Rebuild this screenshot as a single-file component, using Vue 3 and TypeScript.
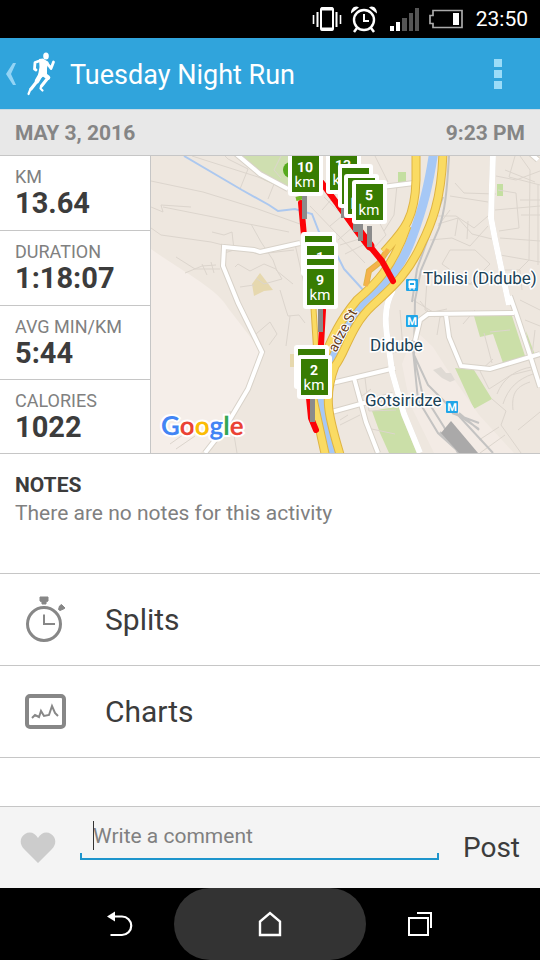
<script setup lang="ts">
import { ref } from 'vue'

interface Stat {
  label: string
  value: string
}

interface Marker {
  x: number
  y: number
  km: number
}

const stats: Stat[] = [
  { label: 'KM', value: '13.64' },
  { label: 'DURATION', value: '1:18:07' },
  { label: 'AVG MIN/KM', value: '5:44' },
  { label: 'CALORIES', value: '1022' },
]

const markers: Marker[] = [
  { x: 330, y: 154, km: 13 },
  { x: 342, y: 168, km: 12 },
  { x: 348, y: 178, km: 4 },
  { x: 356, y: 184, km: 5 },
  { x: 292, y: 156, km: 10 },
  { x: 305, y: 236, km: 7 },
  { x: 307, y: 246, km: 1 },
  { x: 307, y: 259, km: 8 },
  { x: 307, y: 269, km: 9 },
  { x: 298, y: 349, km: 3 },
  { x: 301, y: 359, km: 2 },
]

const posts: { x: number; y: number; h: number }[] = [
  { x: 302, y: 195, h: 24 },
  { x: 341, y: 204, h: 14 },
  { x: 353, y: 218, h: 14 },
  { x: 358, y: 222, h: 19 },
  { x: 367, y: 226, h: 21 },
  { x: 318, y: 307, h: 25 },
  { x: 310, y: 398, h: 24 },
]

const comment = ref('')
const liked = ref(false)
</script>

<template>
  <div class="screen">
    <div class="status">
      <svg width="30" height="26" viewBox="0 0 30 26" fill="none" stroke="#fff">
        <rect x="9" y="2" width="12" height="22" rx="1.5" stroke-width="2" />
        <path d="M9 3h12M9 23h12" stroke-width="3" />
        <path d="M5.500 6v15M24.500 6v15" stroke-width="2" />
        <path d="M1.500 9v9M28.500 9v9" stroke-width="1.600" />
      </svg>
      <svg width="28" height="28" viewBox="0 0 28 28" fill="none" stroke="#fff">
        <circle cx="14" cy="15" r="10" stroke-width="2.400" />
        <path d="M14 9v7h5" stroke-width="2" />
        <path d="M7 23l-3 4M21 23l3 4" stroke-width="2.500" />
        <path d="M1 8.500C1 3 5 0 9 2.500zM27 8.500C27 3 23 0 19 2.500z" fill="#fff" stroke="none" />
      </svg>
      <svg class="signal" width="30" height="24" viewBox="0 0 30 24">
        <path d="M0 19h4v5H0zM6 15h4v9H6z" fill="#fff" />
        <path d="M12 11h5v13h-5zM19 6h4v18h-4zM25 1h4v23h-4z" fill="#555" />
      </svg>
      <svg width="36" height="20" viewBox="0 0 36 20">
        <path d="M5 1.500h29v17H5v-4H2v-8h3z" fill="none" stroke="#aaa" stroke-width="1.700" />
        <path d="M25 4h6v12h-6z" fill="#fff" />
      </svg>
      <time>23:50</time>
    </div>

    <header class="bar">
      <button class="up" type="button" aria-label="Back">
        <svg width="11" height="22" viewBox="0 0 11 22">
          <path d="M10 0 7 0 0 11 7 22h3L5 11z" fill="#93d4f5" />
        </svg>
        <svg width="30" height="44" viewBox="0 0 30 44" fill="none" stroke="#fff" stroke-linejoin="round" stroke-linecap="round">
          <ellipse cx="19" cy="4" rx="2.800" ry="3.600" fill="#fff" stroke="none" />
          <path d="M12 7 16 6.500 21.500 10 20 16 20 22 14 26 11 23.500 12.500 15z" fill="#fff" stroke="none" />
          <path d="M13.500 8.500 8 10.500 7.500 17 9 18M20 11 24 16.500 26.500 10" stroke-width="2.800" />
          <path d="M13.500 23 10 29M17 22.500 21 25.500" stroke-width="4.600" />
          <path d="M9.500 30 4 37M20.500 26.500 14.500 34" stroke-width="3.200" />
          <path d="M3.500 37 1.500 42M14 34.500 13.500 36.500 15.500 38.500" stroke-width="2.200" />
        </svg>
      </button>
      <h1>Tuesday Night Run</h1>
      <button class="more" type="button" aria-label="More options">
        <svg width="8" height="32" viewBox="0 0 8 32">
          <path d="M0 1h8v8H0zM0 12h8v8H0zM0 23h8v8H0z" fill="#9bdcf8" />
        </svg>
      </button>
    </header>

    <div class="date"><span>MAY 3, 2016</span><span>9:23 PM</span></div>

    <section class="summary">
      <dl class="stats">
        <div v-for="s in stats" :key="s.label" class="stat">
          <dt>{{ s.label }}</dt>
          <dd>{{ s.value }}</dd>
        </div>
      </dl>
      <svg class="map" viewBox="151 156 389 297" preserveAspectRatio="xMidYMid slice" role="img" aria-label="Route map">
        <rect x="100" y="100" width="500" height="400" fill="#eee7df" />
        <path d="M151 249C180 270 218 289 228 308L262 352 226 432 200 453H151z" fill="#f5eee9" />
        <path d="M235 156h61v27l-12 6-20-9z" fill="#cfdfb0" />
        <path d="M398 172h8v11h-8zM497 184h6v12h-6z" fill="#c4dfa1" />
        <path d="M474 316h38l13 40-22 7-10-29-13 3zM455 368l19 2 18 29-18 10zM372 411l28-5 18 47h-29l-9-20z" fill="#cbdfa8" />
        <path d="M526 331l9 24-5 2z" fill="#cbdfa8" />
        <path d="M260 273l13 17-9 1-10 5-2-12zM290 354h9v13h-9z" fill="#e6d8ae" />
        <path d="M415 330l18 17 14 22 32 46 35 38h-80l-24-49-8-40z" fill="#f3ebe5" />
        <path d="M433 370l8-3 5 6 5 0 4 7-5 2-8-4z" fill="#dfdad4" />

        <g class="lanes">
          <path d="M151 181 203 192 255 208 300 224M151 207l12 5-2-7 30 2M151 228l10 7 50 7 48 12 35-4M163 207l126 25M192 156l66 21 16 7-6 15M225 156l3 3 20 10-8 20M212 232l12 3 8-3 2 18-13 4M251 224l10 18 12 18 4 11 16 13M176 257l19 12h25M185 273l17-7 14-1M202 264l5 11M211 262l3 11M235 267l3-3 12 7 14-7 12 5 6 10-18 5-8-6M240 287l14-2M280 290l6 20 2 6 11-1 6 8M290 316l-4 30M281 178l-7-8 7-14" />
          <path d="M322 210l16-18M330 226l18-15M338 240l16-14M345 254l20-10M310 206l55 57M324 197l45 44M295 244l14 62M378 220l8 15-12 13M397 185l-3 30-10 16M340 245l29-9M362 240l9 9M450 196l38 6M455 183l9 10 32 1M438 216l18 0 18 12 14-12M438 224l20-6 14 16 20 5M430 240l22-2 18 8 18-20M450 210l-12 16M458 218l-3 18M468 221l-1 18M495 210l45-4M515 156l-6 21 31 8M496 176l20 4 24-9M505 170l30 12M498 190l18 3 3 35-20 3M520 156l10 14-1 90-12 12M500 238l40 3M500 255l40 7M450 250l25 0 15 14-20 20-28-20zM460 284l30 0M500 270l20 0 2 20M520 200h20M521 215h19M538 185v80" />
          <path d="M413 300l20 12 14-3M427 280l-2 30 10 7M460 314l-20 3-3 18M463 324l12-14M493 359l-13 12 9 18 22-14 24-6M492 399l14 12-5 14 20 28M497 394c6-16 20-25 35-27M503 404c5-16 15-25 30-30M513 410c-2-18 5-24 17-28M518 430l22-18M357 386l5 10 9-7M365 378l4 33 27-1M340 425l20-10M367 428l28 6M400 310l3 40-10 3M420 301l8 10M510 302l15 40M520 300l20 10M525 320l15 6M535 330l-3 25M248 330l8 4 14-12 7 12-8 11M170 444l17-12M176 449l19-13M230 411l7 42M375 156l13 26M340 420l8-5M510 330l-20 2M492 363l-8-30M479 440l20-13M480 453l25-18" />
        </g>
        <path d="M184 156 242 190 269 205 278 211 295 209 312 214 319 232 334 249 344 269 365 292" fill="none" stroke="#acc8ef" stroke-width="2" />

        <g class="rail">
          <path d="M449 156c-2 35-4 55-10 72l-18 42-6 30-1 56 8 36 22 35 14 26M443 197l-26 72-5 33M414 355l14 30 30 30 35 38M412 340l6 60 20 33 22 20" />
          <path d="M440 432l20 21M449 409l30 20M452 413l27 10M459 413l20 17" />
        </g>
        <path d="M441 433l10-12 27 32h-19z" fill="#aaa9a9" />

        <g class="roadEdge">
          <path d="M235 153 260 174 288 189" />
          <path d="M300 243 260 252 254 250 224 247 223 266 238 303 262 352 248 389 226 426 205 453" />
          <path d="M493 153 491 218 495 239 509 305" />
          <path d="M510 296 517 316 529 352 540 387" />
          <path d="M393 290C379 315 389 340 392 372L404 414 420 453" />
          <path d="M415 341l5-21 8-6 86-1M446 315l3 22 12 29 29 3 50-15" />
          <path d="M328 384l67-16M354 378l12 44 12 31M328 413l65-18M374 188l40-5M530 153l8 7" />
        </g>
        <g class="road">
          <path d="M235 153 260 174 288 189" />
          <path d="M300 243 260 252 254 250 224 247 223 266 238 303 262 352 248 389 226 426 205 453" />
          <path class="wide" d="M493 153 491 218 495 239 509 305" />
          <path d="M510 296 517 316 529 352 540 387" />
          <path class="wide" d="M393 290C379 315 389 340 392 372L404 414 420 453" />
          <path d="M415 341l5-21 8-6 86-1M446 315l3 22 12 29 29 3 50-15" />
          <path d="M328 384l67-16M354 378l12 44 12 31M328 413l65-18M374 188l40-5M530 153l8 7" />
        </g>

        <path class="river" d="M434 150C429 185 423 208 412 238 405 257 395 274 382 286 356 303 349 322 338 345 325 364 316 382 321 410L332 458" />
        <g class="highwayEdge">
          <path d="M416 150V180C415 222 401 233 384 252M407 226C392 270 373 286 357 300 340 320 332 338 323 360L311 390 326 458" />
          <path d="M443 150C442 200 431 225 421 245 407 276 389 290 373 305 350 326 346 352 335 366 322 400 330 420 341 458" />
          <path class="thin" d="M313 300l3 48-8 50M388 249l-9 14-10 8-3 15" />
        </g>
        <g class="highway">
          <path d="M416 150V180C415 222 401 233 384 252M407 226C392 270 373 286 357 300 340 320 332 338 323 360L311 390 326 458" />
          <path d="M443 150C442 200 431 225 421 245 407 276 389 290 373 305 350 326 346 352 335 366 322 400 330 420 341 458" />
          <path class="thin" d="M313 300l3 48-8 50" />
          <path class="thin ramp" d="M388 249l-9 14-10 8-3 15" />
        </g>

        <circle cx="291" cy="170" r="8" fill="#56a91d" />
        <path d="M296 199l8-2" stroke="#76b82a" stroke-width="4" />
        <path d="M301 203 304 236M322 307 323 310 321 345M309 398 311 418 316 430" class="track" />
        <path d="M322 183 347 217 368 244 382 261 393 281" class="track" />
        <path d="M340 205 357 229 370 246" class="track heavy" />
        <g fill="#8b8b8b">
          <rect v-for="p in posts" :key="p.x" :x="p.x" :y="p.y" width="5" :height="p.h" />
        </g>

        <g v-for="m in markers" :key="m.km" class="marker">
          <rect :x="m.x - 4" :y="m.y - 4" width="35" height="44" rx="3" fill="#fff" />
          <rect :x="m.x" :y="m.y" width="27" height="36" fill="#387c02" />
          <text class="num" :x="m.x + 13" :y="m.y + 16">{{ m.km }}</text>
          <text class="unit" :x="m.x + 13" :y="m.y + 31">km</text>
        </g>

        <text class="street" transform="translate(336 353) rotate(-62)">adze St</text>

        <g class="station">
          <rect x="406" y="279" width="12" height="12" rx="1" />
          <path d="M409 281h6v7h-6zM409 289h2M413 289h2" fill="#fff" stroke="#fff" />
          <path d="M410 283h4v2h-4z" fill="#20a5e8" />
          <rect x="406" y="315" width="12" height="12" rx="1" />
          <rect x="446" y="401" width="12" height="12" rx="1" />
          <text x="412" y="325">M</text>
          <text x="452" y="411">M</text>
        </g>
        <g class="place">
          <text x="423" y="284">Tbilisi (Didube) B</text>
          <text x="370" y="351">Didube</text>
          <text x="365" y="406">Gotsiridze</text>
        </g>
        <text class="google" x="161" y="435"><tspan fill="#4285f4">G</tspan><tspan fill="#ea4335">o</tspan><tspan fill="#fbbc05">o</tspan><tspan fill="#4285f4">g</tspan><tspan fill="#34a853">l</tspan><tspan fill="#ea4335">e</tspan></text>
      </svg>
    </section>

    <section class="notes">
      <h2>NOTES</h2>
      <p>There are no notes for this activity</p>
    </section>

    <nav class="links">
      <button type="button">
        <svg width="42" height="48" viewBox="0 0 42 48" fill="none" stroke="#878787">
          <circle cx="19" cy="28" r="16.500" stroke-width="3" />
          <path d="M19 18.500V28h11" stroke-width="2" />
          <path d="M15 1h8v4l-2 1v2h-4V6l-2-1zM33.500 13.500l1-3.500 2-1.500 3.500 3.500-1.500 1-3.500 1.500z" fill="#878787" stroke="#878787" stroke-width="1" />
        </svg>
        Splits
      </button>
      <button type="button">
        <svg width="42" height="36" viewBox="0 0 42 36" fill="none" stroke="#878787">
          <rect x="2" y="2" width="37" height="31" rx="3" stroke-width="4" />
          <path d="M7 24l3-3 4 2 2-6 3 5 5-1 3-9 3 7 3 3" stroke-width="2" />
        </svg>
        Charts
      </button>
    </nav>

    <form class="comment" @submit.prevent="comment = ''">
      <button class="like" type="button" aria-label="Like" :aria-pressed="liked" @click="liked = !liked">
        <svg width="36" height="32" viewBox="0 0 36 32">
          <path d="M18 31 4 17C-1 12 0 5 5 2c5-3 10-1 13 4 3-5 8-7 13-4 5 3 6 10 1 15z" fill="#ccc" />
        </svg>
      </button>
      <div class="field">
        <input v-model="comment" type="text" aria-label="Write a comment" placeholder="Write a comment" />
      </div>
      <button class="post" type="submit">Post</button>
    </form>

    <nav class="system">
      <button type="button" aria-label="Back">
        <svg width="26" height="26" viewBox="0 0 26 26">
          <path d="M6 5.500h9a9.200 9.200 0 0 1 0 18.500H3.500" fill="none" stroke="#fff" stroke-width="2.200" />
          <path d="M0 5.500 8 .5v10z" fill="#fff" />
        </svg>
      </button>
      <button class="home" type="button" aria-label="Home">
        <svg width="24" height="26" viewBox="0 0 24 26">
          <path d="M2 24V10.500L12 2l10 8.500V24z" fill="none" stroke="#fff" stroke-width="2.400" />
        </svg>
      </button>
      <button type="button" aria-label="Recent apps">
        <svg width="26" height="26" viewBox="0 0 26 26" fill="none" stroke="#fff" stroke-width="2">
          <path d="M2 7h19v17H2zM10 2h14v15" />
        </svg>
      </button>
    </nav>
  </div>
</template>

<style>
body {
  margin: 0;
}
</style>

<style scoped>
.screen {
  display: flex;
  flex-direction: column;
  min-height: 100vh;
  background: #fff;
  color: #3c3c3c;
  font-family: Roboto, "Liberation Sans", sans-serif;
}

button {
  padding: 0;
  border: 0;
  background: none;
  color: inherit;
  font: inherit;
}

svg {
  display: block;
  flex: none;
}

h1,
h2,
p,
dl,
dd {
  margin: 0;
}

.status {
  display: flex;
  align-items: center;
  justify-content: flex-end;
  gap: 8px;
  height: 38px;
  padding-right: 12px;
  background: #000;
  color: #fff;
  font-size: 21px;
}

.status time {
  margin-left: 4px;
}

.status .signal {
  margin-left: 4px;
}

.bar {
  display: flex;
  align-items: center;
  height: 71px;
  padding: 0 38px 0 6px;
  border-bottom: 1px solid #c8dbe5;
  background: #30a4dc;
  color: #fff;
}

.up {
  display: flex;
  align-items: center;
  gap: 10px;
}

.bar h1 {
  flex: 1;
  margin-left: 13px;
  padding-top: 2px;
  font-size: 27px;
  font-weight: 400;
}

.date {
  display: flex;
  align-items: center;
  justify-content: space-between;
  height: 45px;
  padding: 0 15px;
  border-bottom: 1px solid #c6c6c6;
  background: #e8e8e8;
  color: #858585;
  font-size: 21px;
  font-weight: 700;
}

.summary {
  display: flex;
  height: 297px;
  border-bottom: 1px solid #c6c6c6;
}

.stats {
  display: grid;
  grid-template-rows: repeat(4, 1fr);
  flex: none;
  width: 150px;
  border-right: 1px solid #c6c6c6;
}

.stat {
  padding: 10px 0 0 15px;
}

.stat + .stat {
  border-top: 1px solid #c6c6c6;
}

.stat dt {
  color: #808080;
  font-size: 18px;
  line-height: 22px;
}

.stat dd {
  font-size: 29px;
  font-weight: 700;
  line-height: 30px;
}

.map {
  flex: 1;
  min-width: 0;
  height: 100%;
  text-rendering: geometricPrecision;
}

.lanes {
  fill: none;
  stroke: #dcd5cd;
  stroke-width: 1;
}

.rail {
  fill: none;
  stroke: #c4c3c2;
  stroke-width: 2;
}

.roadEdge {
  fill: none;
  stroke: #d8d2c9;
  stroke-width: 6;
}

.road {
  fill: none;
  stroke: #fff;
  stroke-width: 4;
}

.road .wide {
  stroke-width: 6;
}

.river {
  fill: none;
  stroke: #a6c8f6;
  stroke-width: 9;
}

.highwayEdge {
  fill: none;
  stroke: #dfb443;
  stroke-width: 9;
}

.highway {
  fill: none;
  stroke: #fadb63;
  stroke-width: 7;
}

.highwayEdge .thin {
  stroke-width: 6;
}

.highway .thin {
  stroke-width: 4;
}

.highway .ramp {
  stroke: #f5b24b;
}

.track {
  fill: none;
  stroke: #fb0308;
  stroke-width: 6;
  stroke-linecap: round;
  stroke-linejoin: round;
}

.heavy {
  stroke-width: 9;
}

.marker text {
  fill: #fff;
  text-anchor: middle;
}

.marker .num {
  font-size: 14px;
  font-weight: 700;
}

.marker .unit {
  font-size: 15px;
}

.street {
  fill: #6b3d18;
  stroke: #fff;
  stroke-width: 2px;
  paint-order: stroke;
  font-size: 14px;
}

.station rect {
  fill: #20a5e8;
}

.station text {
  fill: #fff;
  font-size: 11px;
  font-weight: 700;
  text-anchor: middle;
}

.place text {
  fill: #1b4256;
  stroke: #fff;
  stroke-width: 3px;
  paint-order: stroke;
  font-size: 17px;
}

.google {
  stroke: #fff;
  stroke-width: 4px;
  paint-order: stroke;
  font-family: Lato, sans-serif;
  font-size: 26px;
  font-weight: 700;
}

.notes {
  height: 120px;
  padding: 18px 15px 0;
  border-bottom: 1px solid #c6c6c6;
  box-sizing: border-box;
}

.notes h2 {
  font-size: 21px;
  font-weight: 700;
  line-height: 26px;
}

.notes p {
  color: #808080;
  font-size: 21px;
  line-height: 30px;
}

.links {
  flex: 1;
}

.links button {
  display: flex;
  align-items: center;
  gap: 38px;
  width: 100%;
  height: 92px;
  padding: 0 25px;
  border-bottom: 1px solid #c6c6c6;
  font-size: 30px;
}

.comment {
  display: flex;
  align-items: center;
  gap: 24px;
  height: 81px;
  padding: 0 20px;
  border-top: 1px solid #c6c6c6;
  background: #f4f4f4;
}

.field {
  position: relative;
  flex: 1;
  align-self: flex-start;
  min-width: 0;
  height: 53px;
}

/* Bracket-shaped underline of the focused field */
.field::after {
  content: "";
  position: absolute;
  right: 0;
  bottom: 0;
  left: 0;
  height: 5px;
  border: 2px solid #1e95cc;
  border-top: 0;
  pointer-events: none;
}

/* Text cursor */
.field::before {
  content: "";
  position: absolute;
  top: 14px;
  left: 13px;
  width: 1px;
  height: 29px;
  background: #333;
}

.field input {
  box-sizing: border-box;
  width: 100%;
  height: 53px;
  padding: 4px 13px 0;
  border: 0;
  outline: 0;
  background: none;
  color: #3c3c3c;
  font: inherit;
  font-size: 21px;
}

.field input::placeholder {
  color: #808080;
  opacity: 1;
}

.post {
  font-size: 28px;
}

.system {
  display: flex;
  justify-content: center;
  height: 72px;
  background: #000;
}

.system button {
  display: flex;
  align-items: center;
  justify-content: center;
  width: 108px;
}

.system .home {
  width: 192px;
  border-radius: 36px;
  background: #333;
}
</style>
